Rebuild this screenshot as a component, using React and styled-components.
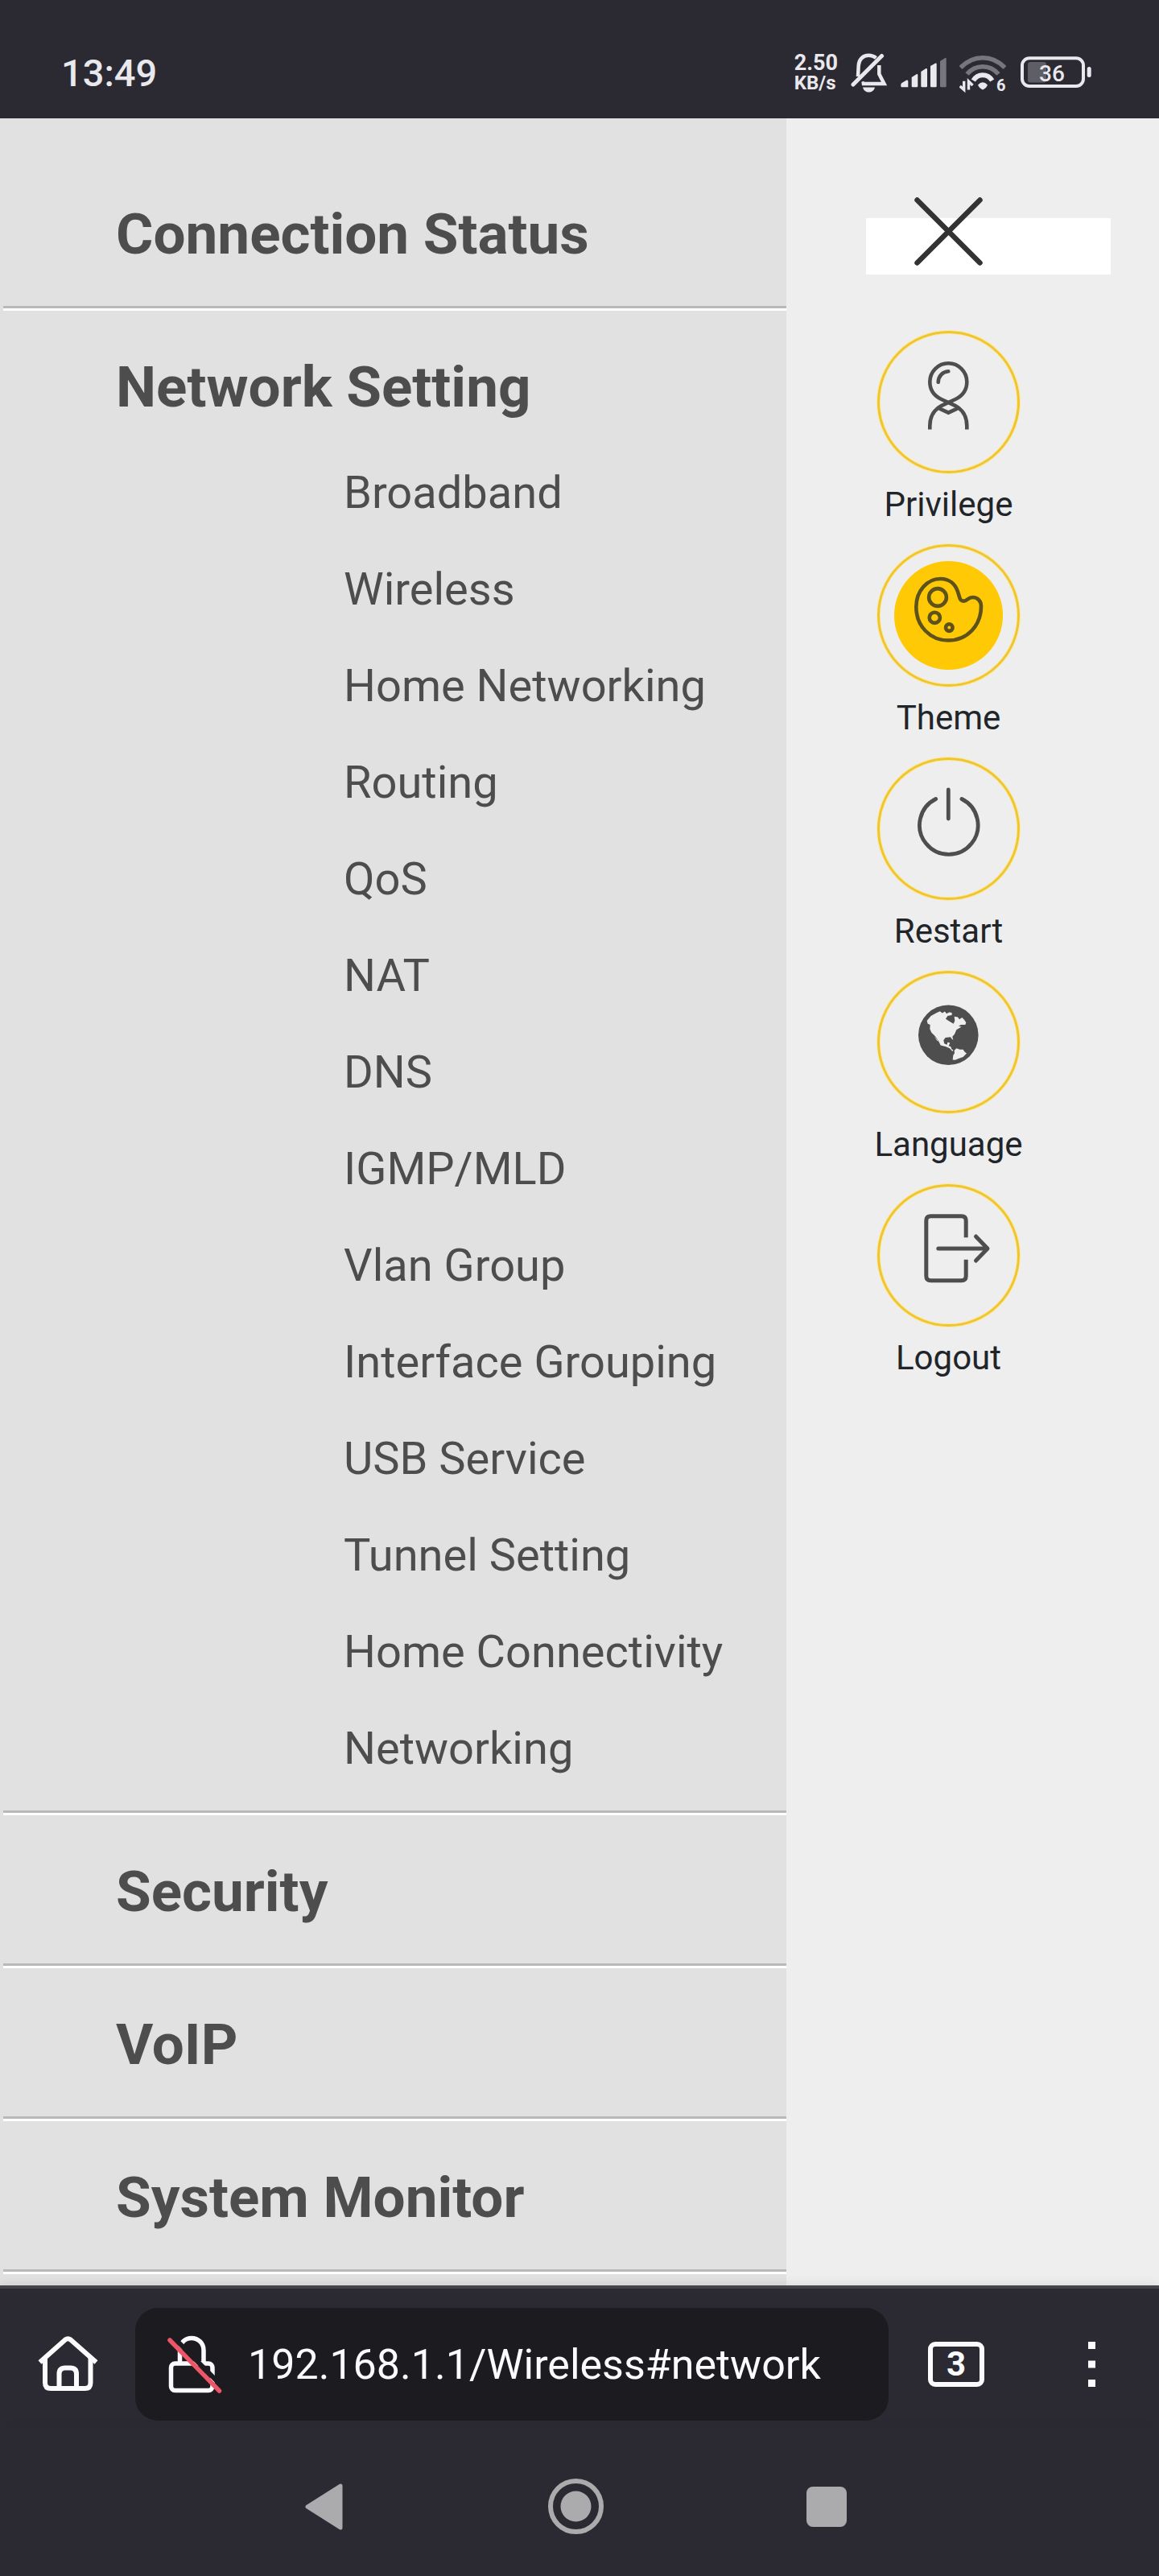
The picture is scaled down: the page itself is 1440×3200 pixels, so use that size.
import React from 'react'

import styled, { createGlobalStyle } from 'styled-components'

const GlobalStyle = createGlobalStyle`
    * {
        box-sizing: border-box;
    }

    body {
        margin: 0;
        background-color: #2b2a33;
        font-family: Roboto, 'Liberation Sans', sans-serif;
    }

    button {
        padding: 0;
        border: 0;
        background: none;
        color: inherit;
        font-family: inherit;
        cursor: pointer;
    }

    a {
        color: inherit;
        text-decoration: none;
    }

    svg {
        display: block;
        flex-shrink: 0;
    }
`

const Screen = styled.div`
    display: flex;
    flex-direction: column;
    min-height: 100vh;
`

const StatusBar = styled.header`
    display: flex;
    justify-content: space-between;
    align-items: center;
    height: 147px;
    padding: 35px 84px 0 76px;
    background-color: #2b2a33;
    color: #e9e8ec;
`

const Clock = styled.time`
    font-size: 47px;
    font-weight: 500;
    line-height: 56px;
`

const StatusIcons = styled.div`
    display: flex;
    align-items: center;
    gap: 16px;
`

const Speed = styled.div`
    display: flex;
    flex-direction: column;
    font-size: 27px;
    font-weight: 700;
    line-height: 25px;
`

const SpeedUnit = styled.span`
    font-size: 24px;
`

const Page = styled.main`
    display: grid;
    grid-template-columns: minmax(0, 1fr) 463px;
    flex: 1;
    background-color: #eeeeee;
`

const Menu = styled.nav`
    padding: 49px 0 0 4px;
    background-color: #e1e1e1;
    color: #4d4d4d;
`

const MenuList = styled.ul`
    list-style: none;
    margin: 0;
    padding: 0;
`

const MenuItem = styled.li`
    margin-bottom: 3px;
    border-bottom: 3px solid #b9b9b9;
    box-shadow: 0 3px 0 #ffffff;
`

const MenuTitle = styled.a`
    display: block;
    padding: 41px 0 ${props => props.$open ? '17px' : '35px'} 140px;
    font-size: 71px;
    font-weight: 700;
    line-height: 108px;
`

const SubList = styled.ul`
    list-style: none;
    margin: 0;
    padding: 0 0 17px 423px;
    font-size: 56px;
    line-height: 120px;
`

const SubLink = styled.a`
    display: block;
`

const Side = styled.aside`
    padding: 124px 60px 0 99px;
`

const CloseBar = styled.div`
    position: relative;
    height: 70px;
    margin-bottom: 70px;
    background-color: #ffffff;
`

const CloseButton = styled.button`
    position: absolute;
    top: -26px;
    left: 60px;
`

const Tools = styled.div`
    display: flex;
    flex-direction: column;
    gap: 18px;
    width: 205px;
`

const Tool = styled.button`
    display: flex;
    flex-direction: column;
    align-items: center;
    gap: 8px;
    color: #212529;
    font-size: 42px;
    line-height: 62px;
`

const Ring = styled.span`
    display: block;
    width: 177px;
    height: 177px;
    border-radius: 50%;
    border: 3px solid #f0c62c;
    box-shadow: 0 0 0 1px #fbe9a4, inset 0 0 0 1px #fbe9a4;
    color: ${props => props.$active ? '#5d511c' : '#4e4e4e'};
    background: ${props => props.$active
        ? 'radial-gradient(circle, #ffc905 67px, transparent 68px)'
        : 'none'};

    svg {
        margin: -3px;
    }
`

const Toolbar = styled.footer`
    display: flex;
    align-items: center;
    position: relative;
    padding: 24px 79px 0 47px;
    border-top: 4px solid #45444b;
    background-color: #2b2a33;
    box-shadow: 0 -2px 12px rgba(0, 0, 0, .08);
    color: #fbfbfe;
`

const Address = styled.label`
    display: flex;
    align-items: center;
    flex: 1;
    gap: 30px;
    min-width: 0;
    height: 140px;
    margin: 0 49px 0 46px;
    padding: 0 40px;
    border-radius: 28px;
    background-color: #1c1b20;
`

const AddressInput = styled.input`
    flex: 1;
    min-width: 0;
    padding: 2px 0 0;
    border: 0;
    outline: 0;
    background: none;
    color: inherit;
    font-family: inherit;
    font-size: 52px;
    line-height: 64px;
`

const TabCount = styled.button`
    width: 70px;
    height: 56px;
    margin-right: 129px;
    border: 6px solid #fbfbfe;
    border-radius: 9px;
    font-size: 42px;
    font-weight: 700;
    line-height: 44px;
`

const SystemNav = styled.div`
    display: flex;
    justify-content: center;
    align-items: center;
    gap: 252px;
    height: 193px;
    padding: 20px 10px 0 0;
    background-color: #2b2a33;
    color: #ababad;
`

const sections = [
    { title: 'Connection Status' },
    {
        title: 'Network Setting',
        items: [
            'Broadband',
            'Wireless',
            'Home Networking',
            'Routing',
            'QoS',
            'NAT',
            'DNS',
            'IGMP/MLD',
            'Vlan Group',
            'Interface Grouping',
            'USB Service',
            'Tunnel Setting',
            'Home Connectivity',
            'Networking'
        ]
    },
    { title: 'Security' },
    { title: 'VoIP' },
    { title: 'System Monitor' }
]

const PrivilegeIcon = () => (
    <g strokeWidth="4.6">
        <path d="M65.3 122.5V118C65.3 105 72 97 80 92.8L97 85C105.5 81 111.3 73.5 111.3 63.3A23 23 0 0 0 65.3 63.3C65.3 73.5 71 81 79.6 85L96.6 92.8C104.6 97 111.3 105 111.3 118V122.5" />
        <path d="M77 96.3L88.3 101.6L99.6 96.3" />
        <path d="M75.7 63.8C76 56 81 50.8 88.3 50.3" strokeLinecap="round" />
    </g>
)

const ThemeIcon = () => (
    <g strokeWidth="4.6">
        <path d="M78.3 43C62 43 48.3 58 48.3 78C48.3 102 66 119.5 88 119.5C112 119.5 129 101 129 77C129 70.5 124.5 66 118.5 66C112.5 66 112 70.6 107.5 70.6C102 70.6 102.5 66 100 59C97 50 90 43 78.3 43Z" />
        <circle cx="75" cy="66" r="10.9" />
        <circle cx="71.3" cy="91.3" r="6.6" />
        <circle cx="89.3" cy="103.6" r="4.3" />
    </g>
)

const RestartIcon = () => (
    <g strokeWidth="4.8" strokeLinecap="round">
        <path d="M88.3 40V76" />
        <path d="M72.7 51.5A36.3 36.3 0 1 0 104.9 51.5" />
    </g>
)

const LanguageIcon = () => (
    <g stroke="none">
        <circle cx="88.3" cy="79.8" r="37.3" fill="currentColor" />
        <g transform="translate(-50 -15.6) scale(.3333 .3444)" fill="#eeeeee">
            <path d="M335 225L350 208L372 196L384 191L392 198L402 192L408 200L418 195L428 196L428 205L412 208L405 219L420 228L434 236L439 226L437 210L450 212L456 220L466 214L474 222L481 232L478 240L462 240L453 245L464 247L445 258L438 274L430 283L433 295L427 290L423 284L404 286L397 296L400 308L410 312L412 303L421 305L416 316L424 319L427 328L433 331L430 336L420 325L404 318L386 314L378 298L366 281L352 268L346 255L347 240L338 236Z" />
            <path d="M437 333L445 325L458 329L470 329L475 337L483 343L470 356L455 361L440 367L431 366L433 350L438 342Z" />
            <path d="M362 280L379 300L372 296Z" />
        </g>
    </g>
)

const LogoutIcon = () => (
    <g strokeWidth="5">
        <path d="M110.2 66.2V45.5Q110.2 39.7 104.5 39.7H66.5Q60.8 39.7 60.8 45.5V114Q60.8 119.8 66.5 119.8H104.5Q110.2 119.8 110.2 114V93.7" />
        <path d="M75.8 80H136" strokeLinecap="round" />
        <path d="M122.5 65L137 80L122.5 95" strokeLinecap="round" strokeLinejoin="round" />
    </g>
)

const tools = [
    { label: 'Privilege', icon: PrivilegeIcon },
    { label: 'Theme', icon: ThemeIcon, active: true },
    { label: 'Restart', icon: RestartIcon },
    { label: 'Language', icon: LanguageIcon },
    { label: 'Logout', icon: LogoutIcon }
]

function StatusHeader() {
    return (
        <StatusBar>
            <Clock>13:49</Clock>
            <StatusIcons>
                <Speed>
                    2.50
                    <SpeedUnit>KB/s</SpeedUnit>
                </Speed>
                {/* muted bell */}
                <svg width="46" height="50" viewBox="0 0 46 50" fill="none" stroke="currentColor" strokeWidth="4.5">
                    <path d="M9 29L9.7 15.5C10 8 15 2.8 22.3 2.8C26 2.8 29 4 31.5 6" />
                    <path d="M3 39L38.5 3.5" strokeWidth="5" strokeLinecap="round" />
                    <path d="M35.3 15V26L41.5 38H14L17 37" />
                    <path d="M15 42.5H30C28 50.5 17 50.5 15 42.5Z" fill="currentColor" stroke="none" />
                </svg>
                {/* mobile signal */}
                <svg width="57" height="50" viewBox="0 0 57 50" fill="currentColor">
                    <path d="M0.3 39Q0.3 38 1.5 37L7.5 33.5Q9.3 33 9.3 35V42.3H1.5Q0.3 42.3 0.3 41Z" />
                    <path d="M13.7 30L20 26Q21.3 25.7 21.3 27V41Q21.3 42.3 20 42.3H15Q13.7 42.3 13.7 41Z" />
                    <path d="M25.3 23L31.5 19Q33 18.7 33 20V41Q33 42.3 31.7 42.3H26.6Q25.3 42.3 25.3 41Z" />
                    <path d="M37 16L43.3 12.5Q44.7 12 44.7 13.5V41Q44.7 42.3 43.4 42.3H38.3Q37 42.3 37 41Z" />
                    <path d="M49 10L55.3 5.9Q56.7 5.5 56.7 7V41Q56.7 42.3 55.4 42.3H50.3Q49 42.3 49 41Z" fill="#77767d" />
                </svg>
                {/* wifi 6 */}
                <svg width="58" height="58" viewBox="0 -4 58 58" fill="none" stroke="currentColor">
                    <g stroke="#77767d" strokeWidth="5.5">
                        <path d="M1.5 18C17 1.5 41 1.5 56.5 18" />
                        <path d="M9.5 26C20 13.5 38 13.5 48.5 26" />
                    </g>
                    <path d="M17.3 34C23 25 35 25 40.7 34" strokeWidth="6" />
                    <path d="M23 39.5Q29 33 35 39.5Q33 44 29 45.5Q25 44 23 39.5Z" fill="currentColor" stroke="none" />
                    <path d="M5.7 34.7V45.5L0.7 41M11.5 45.5V35L16.5 40" strokeWidth="3.4" />
                    <text x="46" y="47" fill="currentColor" stroke="none" fontSize="20" fontWeight="700">6</text>
                </svg>
                <svg width="90" height="50" viewBox="-2 0 90 50">
                    <rect x="9" y="11" width="23" height="25.5" rx="3" fill="#5f5e66" />
                    <rect x="2" y="6.3" width="76" height="34.7" rx="9" fill="none" stroke="currentColor" strokeWidth="4" />
                    <rect x="82.7" y="17" width="5" height="13" rx="2.5" fill="currentColor" />
                    <text x="39" y="35" textAnchor="middle" fill="currentColor" fontSize="28" fontWeight="500">36</text>
                </svg>
            </StatusIcons>
        </StatusBar>
    )
}

function NavMenu() {
    return (
        <Menu>
            <MenuList>
                {sections.map(section => (
                    <MenuItem key={section.title}>
                        <MenuTitle href="#" $open={!!section.items}>{section.title}</MenuTitle>
                        {section.items && (
                            <SubList>
                                {section.items.map(item => (
                                    <li key={item}>
                                        <SubLink href="#network">{item}</SubLink>
                                    </li>
                                ))}
                            </SubList>
                        )}
                    </MenuItem>
                ))}
            </MenuList>
        </Menu>
    )
}

function SidePanel() {
    return (
        <Side>
            <CloseBar>
                <CloseButton aria-label="Close">
                    <svg width="85" height="85" viewBox="0 0 85 85" stroke="#333333" strokeWidth="6.5" strokeLinecap="round">
                        <path d="M3.5 3.5L81.5 81.5M81.5 3.5L3.5 81.5" />
                    </svg>
                </CloseButton>
            </CloseBar>
            <Tools>
                {tools.map(({ label, icon: Icon, active }) => (
                    <Tool key={label}>
                        <Ring $active={active}>
                            <svg width="177" height="177" viewBox="0 0 177 177" fill="none" stroke="currentColor">
                                <Icon />
                            </svg>
                        </Ring>
                        {label}
                    </Tool>
                ))}
            </Tools>
        </Side>
    )
}

function BrowserBar() {
    return (
        <Toolbar>
            <button aria-label="Home">
                <svg width="75" height="70" viewBox="0 0 75 70" fill="none" stroke="#fbfbfe" strokeWidth="6">
                    <path d="M2.5 32.5L34 4.5Q37.4 2 40.8 4.5L72.5 32.5" />
                    <path d="M9 27V58Q9 65 16 65H58.5Q65.5 65 65.5 58V27" />
                    <path d="M26.5 65V47Q26.5 39.5 34 39.5H40.5Q48 39.5 48 47V65" />
                </svg>
            </button>
            <Address>
                <svg width="70" height="72" viewBox="0 0 70 72" fill="none" stroke="#fbfbfe" strokeWidth="5.5">
                    <path d="M15.5 35V18.5C15.5 9 22 3.5 30 3.5C38.5 3.5 45 10 45 18.5V35" />
                    <rect x="4.5" y="35" width="51.5" height="33.5" rx="5" />
                    <path d="M6 1L69 64.5" stroke="#1c1b20" strokeWidth="6" />
                    <path d="M3 6L64.5 69" stroke="#ee5566" strokeLinecap="round" />
                </svg>
                <AddressInput type="text" aria-label="Address" defaultValue="192.168.1.1/Wireless#network" />
            </Address>
            <TabCount>3</TabCount>
            <button aria-label="Menu">
                <svg width="9" height="56" viewBox="0 0 9 56" fill="#fbfbfe">
                    <path d="M0 0H9V9H0ZM0 23.5H9V32.5H0ZM0 47H9V56H0Z" />
                </svg>
            </button>
        </Toolbar>
    )
}

function App() {
    return (
        <Screen>
            <GlobalStyle />
            <StatusHeader />
            <Page>
                <NavMenu />
                <SidePanel />
            </Page>
            <BrowserBar />
            <SystemNav>
                <button aria-label="Back">
                    <svg width="50" height="58" viewBox="0 0 50 58" fill="currentColor">
                        <path d="M43 0.8Q46.5 -0.5 46.5 3V55Q46.5 58.5 43 57.2L1.5 31Q-0.8 29 1.5 27Z" />
                    </svg>
                </button>
                <button aria-label="Home screen">
                    <svg width="69" height="69" viewBox="0 0 69 69">
                        <circle cx="34.5" cy="34.5" r="31.5" fill="none" stroke="currentColor" strokeWidth="6" />
                        <circle cx="34.5" cy="34.5" r="19" fill="currentColor" />
                    </svg>
                </button>
                <button aria-label="Recent apps">
                    <svg width="50" height="50" viewBox="0 0 50 50">
                        <rect width="50" height="50" rx="8" fill="currentColor" />
                    </svg>
                </button>
            </SystemNav>
        </Screen>
    )
}

export default App
